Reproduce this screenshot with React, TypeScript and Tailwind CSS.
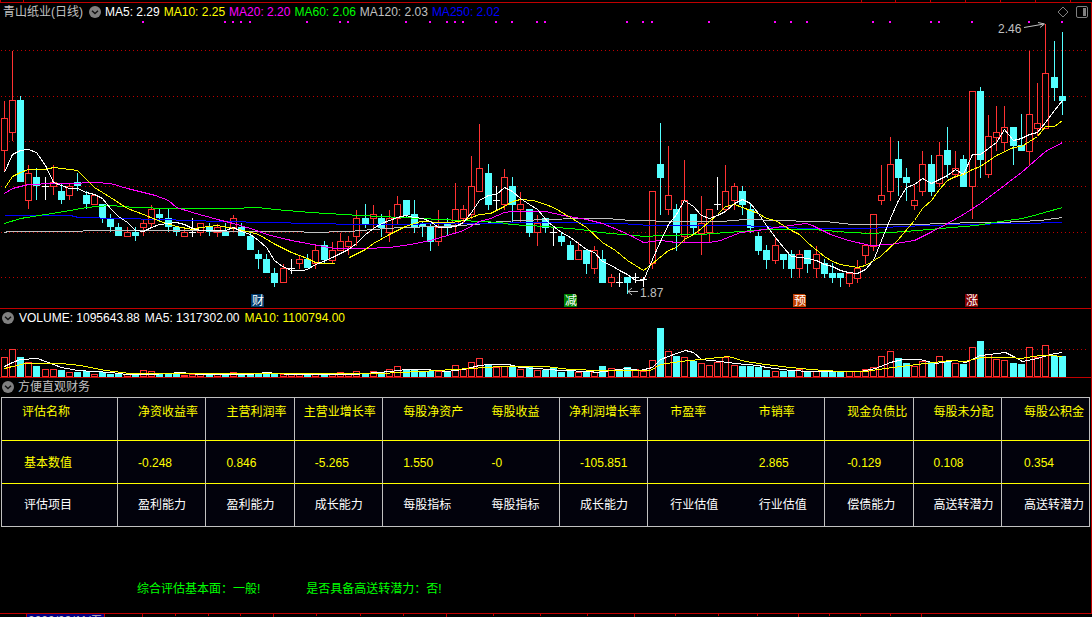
type Kind = 'r' | 'c' | 'w'
// high, body top, body bottom, low, kind, volume top, volume kind (when it differs)
type Candle = [number, number, number, number, Kind, number, Kind?]

const UP = '#ff3232'
const DOWN = '#54ffff'

const candles: Candle[] = [
  [101, 118, 150, 171, 'r', 357],
  [51, 100, 132, 140, 'r', 349],
  [96, 100, 181, 181, 'c', 357],
  [165, 173, 200, 208, 'r', 362],
  [168, 177, 185, 199, 'c', 366],
  [177, 186, 186, 199, 'w', 369],
  [165, 182, 186, 194, 'r', 369],
  [183, 191, 199, 203, 'c', 370],
  [184, 186, 195, 199, 'r', 372],
  [173, 182, 185, 190, 'c', 372],
  [191, 195, 203, 208, 'c', 371],
  [195, 195, 204, 204, 'r', 374],
  [204, 204, 217, 222, 'c', 372],
  [214, 218, 226, 231, 'c', 374],
  [223, 227, 235, 235, 'c', 374],
  [227, 232, 236, 236, 'r', 374],
  [227, 232, 235, 240, 'c', 374],
  [219, 223, 227, 235, 'r', 370],
  [205, 209, 223, 227, 'r', 371],
  [209, 214, 217, 221, 'c', 374],
  [208, 218, 226, 231, 'c', 374],
  [226, 227, 231, 235, 'c', 373],
  [227, 232, 236, 236, 'r', 375],
  [218, 232, 232, 236, 'w', 374],
  [223, 223, 232, 235, 'r', 374],
  [223, 227, 231, 235, 'c', 374],
  [224, 227, 232, 236, 'r', 374],
  [223, 232, 235, 235, 'c', 374],
  [215, 218, 227, 230, 'r', 372],
  [223, 227, 235, 235, 'c', 373],
  [232, 236, 249, 249, 'c', 373],
  [250, 254, 258, 268, 'c', 373],
  [254, 259, 272, 272, 'c', 372],
  [268, 273, 282, 286, 'c', 373],
  [264, 268, 282, 282, 'r', 374],
  [259, 268, 268, 273, 'w', 374],
  [256, 259, 263, 268, 'r', 374],
  [254, 259, 267, 267, 'c', 374],
  [246, 250, 263, 268, 'r', 374],
  [241, 245, 259, 263, 'c', 374],
  [242, 250, 260, 263, 'r', 374],
  [233, 241, 250, 250, 'r', 372],
  [236, 241, 246, 254, 'r', 374],
  [210, 218, 236, 245, 'r', 371],
  [204, 218, 223, 227, 'c', 373],
  [205, 214, 218, 227, 'r', 371],
  [214, 218, 227, 236, 'c', 372],
  [210, 218, 232, 241, 'r', 369],
  [196, 204, 218, 223, 'r', 366],
  [200, 200, 214, 217, 'c', 370],
  [200, 214, 226, 232, 'c', 370],
  [222, 224, 226, 236, 'c', 372],
  [223, 226, 241, 250, 'c', 371],
  [210, 227, 241, 245, 'r', 371],
  [218, 224, 227, 235, 'c', 372],
  [183, 209, 223, 232, 'r', 365],
  [205, 209, 218, 222, 'r', 369],
  [156, 186, 214, 218, 'r', 362],
  [124, 168, 191, 191, 'r', 358],
  [164, 173, 204, 209, 'c', 365],
  [186, 200, 200, 209, 'w', 367],
  [169, 177, 204, 209, 'r', 366],
  [177, 186, 204, 222, 'c', 366],
  [192, 204, 209, 222, 'r', 369],
  [209, 209, 232, 236, 'c', 367],
  [215, 223, 232, 245, 'r', 370],
  [218, 218, 227, 232, 'c', 370],
  [227, 232, 232, 245, 'w', 368, 'c'],
  [232, 236, 241, 245, 'c', 372],
  [241, 245, 259, 259, 'c', 371],
  [242, 250, 259, 259, 'r', 372],
  [250, 250, 263, 273, 'c', 371],
  [246, 250, 268, 273, 'r', 372],
  [250, 259, 282, 282, 'c', 366],
  [274, 277, 282, 286, 'r', 368],
  [273, 282, 282, 286, 'w', 370, 'c'],
  [277, 277, 282, 293, 'c', 367],
  [273, 277, 277, 282, 'w', 369],
  [277, 279, 279, 286, 'w', 371],
  [191, 191, 263, 268, 'r', 360],
  [123, 164, 177, 214, 'c', 328],
  [146, 195, 209, 214, 'r', 351],
  [204, 209, 232, 250, 'c', 356],
  [160, 200, 236, 241, 'r', 357],
  [214, 214, 227, 234, 'c', 361],
  [196, 223, 233, 254, 'r', 363],
  [209, 209, 232, 241, 'r', 365],
  [177, 204, 204, 209, 'w', 362],
  [165, 191, 209, 211, 'r', 357],
  [183, 186, 200, 209, 'r', 365],
  [186, 191, 204, 214, 'c', 366],
  [204, 209, 227, 232, 'c', 366],
  [232, 236, 250, 254, 'c', 367],
  [245, 250, 259, 268, 'c', 370],
  [238, 245, 260, 263, 'r', 371],
  [254, 254, 259, 268, 'c', 371],
  [250, 254, 268, 277, 'c', 371],
  [250, 254, 268, 277, 'r', 369],
  [250, 250, 263, 272, 'c', 372],
  [246, 254, 268, 277, 'r', 371],
  [259, 263, 273, 277, 'c', 371],
  [263, 273, 277, 282, 'c', 371],
  [273, 273, 277, 286, 'c', 372],
  [273, 273, 283, 286, 'r', 371],
  [260, 268, 278, 282, 'r', 371],
  [245, 245, 255, 263, 'r', 369],
  [214, 214, 246, 250, 'r', 367],
  [165, 195, 200, 204, 'r', 356],
  [137, 164, 191, 200, 'r', 351],
  [141, 159, 177, 195, 'c', 358],
  [168, 177, 182, 200, 'c', 363],
  [184, 200, 205, 209, 'r', 366],
  [151, 164, 191, 195, 'r', 361],
  [155, 164, 191, 195, 'c', 362],
  [142, 155, 183, 186, 'r', 356],
  [127, 150, 164, 177, 'c', 361],
  [151, 168, 174, 177, 'r', 363],
  [155, 159, 186, 186, 'c', 364],
  [91, 91, 186, 218, 'r', 347],
  [87, 91, 159, 177, 'c', 341],
  [115, 136, 174, 177, 'r', 354],
  [106, 132, 137, 150, 'r', 359],
  [106, 127, 142, 150, 'r', 360],
  [127, 127, 145, 164, 'c', 363],
  [114, 145, 150, 150, 'c', 364],
  [51, 114, 151, 164, 'r', 347],
  [83, 123, 128, 135, 'r', 357],
  [24, 73, 128, 128, 'r', 345],
  [41, 77, 87, 100, 'c', 356],
  [32, 96, 100, 114, 'c', 356],
]

const priceLines = [
  { color: '#c0c0c0', points: '4,232 8,231 80,231 85,230 150,230 270,231 300,231 307,232 350,231 360,230 400,227 440,226 475,224 500,221 545,219 580,218 607,218 630,220 680,221 720,221 745,219 780,220 810,221 825,221 852,224 920,224 940,223 980,222 1000,222 1040,220 1062,217' },
  { color: '#0000ff', points: '4,215 70,215 78,217 120,218 160,219 220,221 270,222 310,223 360,224 480,223 540,222 620,223 650,225 740,225 780,227 812,228 870,228 900,226 960,224 1020,223 1062,222' },
  { color: '#00ff00', points: '4,223 20,218 45,214 70,210 86,207 110,205 135,207 170,208 230,208 257,207 275,209 310,212 360,215 400,217 440,219 480,221 500,222 510,224 545,226 580,229 600,232 645,236 660,235 700,234 740,231 765,229 812,229 850,232 870,233 905,231 940,228 975,225 1000,221 1022,218 1037,214 1062,207' },
  { color: '#ff00ff', points: '4,193 12,188 28,184 53,183 69,183 94,182 110,183 127,188 143,192 155,195 168,200 176,207 192,212 217,219 233,223 250,228 270,235 291,240 307,243 323,246 334,248 365,248 389,247 410,244 430,240 447,235 463,230 479,221 490,218 504,212 512,211 545,211 563,215 586,219 602,223 619,230 632,236 643,242 660,240 676,242 709,242 720,240 740,232 758,230 775,227 790,225 806,223 812,225 830,234 848,240 870,245 890,244 914,240 930,232 947,223 963,214 980,203 996,191 1021,172 1045,151 1062,142' },
  { color: '#ffff00', points: '4,188 12,176 20,172 28,169 45,169 53,167 69,169 77,170 94,187 110,197 127,208 143,214 160,221 176,226 192,229 200,227 217,225 233,228 243,230 258,234 275,244 291,252 307,258 315,262 323,263 334,263' },
  { color: '#ffff00', points: '349,257 365,249 373,243 389,234 405,226 420,221 443,222 452,222 463,220 471,217 479,214 490,213 504,206 512,201 520,199 533,200 545,204 553,207 570,217 586,227 602,242 615,250 627,260 643,270 652,263 668,250 676,247 684,239 693,234 701,228 717,214 725,206 734,204 750,210 758,213 766,218 775,220 791,230 799,234 808,243 824,256 832,261 840,264 857,267 865,265 880,256 897,240 914,220 922,208 931,200 939,189 947,180 955,176 963,174 972,169 980,166 996,155 1013,147 1021,146 1037,136 1045,126 1054,126 1062,120' },
  { color: '#ffffff', points: '4,172 12,154 20,150 28,149 36,152 45,165 53,182 61,185 69,188 77,188 86,192 94,194 102,198 110,208 118,216 127,222 135,230 143,231 151,227 159,224 168,223 176,222 184,224 192,228 200,230 225,230 233,227 241,231 250,234 258,240 266,247 274,260 282,266 291,270 302,270 307,269 315,264 323,261 332,257 340,253 348,249 356,243 365,234 373,228 381,223 389,220 397,217 405,215 414,217 422,218 430,221 438,227 447,227 455,226 463,222 471,212 479,200 488,195 496,194 504,187 512,191 520,198 529,204 537,209 548,222 561,232 570,237 578,243 586,249 594,252 602,261 611,265 619,270 627,274 635,280 643,280 652,259 660,241 668,224 676,214 684,200 693,206 701,215 709,218 717,215 725,211 734,203 742,199 750,203 758,213 766,225 775,237 783,247 791,256 799,257 807,258 816,260 824,264 832,266 840,270 848,272 857,273 865,269 873,260 881,240 890,218 898,200 906,187 914,184 922,178 931,183 939,179 947,175 955,169 963,174 972,154 980,154 988,148 996,142 1004,129 1013,140 1021,138 1029,134 1037,132 1045,122 1054,110 1062,100' },
]

const volumeLines = [
  { color: '#ffffff', points: '4,366 12,362 20,359 37,358 45,361 61,367 77,370 94,371 110,372 127,374 150,374 168,373 180,372 200,374 250,374 265,372 290,374 356,374 364,373 390,371 405,369 425,369 447,371 463,369 471,367 479,365 488,364 508,364 520,367 537,368 560,370 590,371 596,372 611,370 627,368 640,370 652,367 660,359 676,353 685,350 693,352 701,359 720,361 735,363 758,365 766,367 790,370 810,371 860,371 875,368 890,362 902,359 920,359 935,363 955,360 965,362 980,355 1005,352 1013,356 1022,361 1037,358 1050,354 1062,352' },
  { color: '#ffff00', points: '4,368 12,366 25,363 60,363 80,365 105,370 130,373 380,373 400,372 420,371 470,368 500,366 545,366 570,369 600,370 650,370 660,364 680,361 700,359 728,356 745,361 765,364 790,367 810,369 840,371 865,371 885,368 900,366 925,363 950,360 965,361 980,357 1010,357 1020,358 1040,355 1050,355 1062,356' },
]

const signals = [17, 27, 28, 29, 30, 37, 41, 42, 49, 52, 54, 55, 56, 60, 62, 65, 66, 76, 78, 79, 86, 94, 96, 98, 106, 108, 113, 114, 118, 125, 129]

const events = [
  { label: '财', x: 251, fill: '#003a6c' },
  { label: '减', x: 564, fill: '#008000' },
  { label: '预', x: 793, fill: '#c04000' },
  { label: '涨', x: 965, fill: '#800000' },
]

const averages = [
  { text: 'MA5: 2.29', className: 'text-white' },
  { text: 'MA10: 2.25', className: 'text-[#ffff00]' },
  { text: 'MA20: 2.20', className: 'text-[#ff00ff]' },
  { text: 'MA60: 2.06', className: 'text-[#00ff00]' },
  { text: 'MA120: 2.03', className: 'text-[#c0c0c0]' },
  { text: 'MA250: 2.02', className: 'text-[#0000ff]' },
]

const columns = [
  { name: '评估名称', value: '基本数值', item: '评估项目', pad: 'pl-[22px]', headPad: 'pl-5' },
  { name: '净资收益率', value: '-0.248', item: '盈利能力', pad: 'pl-5', headPad: 'pl-5' },
  { name: '主营利润率', value: '0.846', item: '盈利能力', pad: 'pl-5', headPad: 'pl-5' },
  { name: '主营业增长率', value: '-5.265', item: '成长能力', pad: 'pl-5', headPad: 'pl-[9px]' },
  { name: '每股净资产', value: '1.550', item: '每股指标', pad: 'pl-5', headPad: 'pl-5', open: true },
  { name: '每股收益', value: '-0', item: '每股指标', pad: 'pl-5', headPad: 'pl-5' },
  { name: '净利润增长率', value: '-105.851', item: '成长能力', pad: 'pl-5', headPad: 'pl-[9px]' },
  { name: '市盈率', value: '', item: '行业估值', pad: 'pl-[22px]', headPad: 'pl-[22px]', open: true },
  { name: '市销率', value: '2.865', item: '行业估值', pad: 'pl-[22px]', headPad: 'pl-[22px]' },
  { name: '现金负债比', value: '-0.129', item: '偿债能力', pad: 'pl-[22px]', headPad: 'pl-[22px]' },
  { name: '每股未分配', value: '0.108', item: '高送转潜力', pad: 'pl-5', headPad: 'pl-5' },
  { name: '每股公积金', value: '0.354', item: '高送转潜力', pad: 'pl-[22px]', headPad: 'pl-[22px]', last: true },
]

const candleX = (i: number) => Math.floor(4.1 + i * 8.203)

function edge(col: { open?: boolean; last?: boolean }) {
  return col.open || col.last ? '' : 'border-r border-r-[#c0c0c0]'
}

function MenuButton({ label }: { label: string }) {
  return (
    <button type="button" aria-label={label} className="size-3 shrink-0">
      <svg viewBox="0 0 12 12" className="block size-3">
        <circle cx="6" cy="6" r="6" fill="#808080" />
        <path d="M3 4.8 6 7.6 9 4.8" fill="none" stroke="#111" strokeWidth="1.4" />
      </svg>
    </button>
  )
}

function DottedLine({ y }: { y: number }) {
  return <line x1="1" x2="1088" y1={y + 0.5} y2={y + 0.5} stroke="#c00000" strokeDasharray="1 3" />
}

function Lines({ lines }: { lines: { color: string; points: string }[] }) {
  return (
    <g transform="translate(0.5 0.5)" fill="none">
      {lines.map((line) => (
        <polyline key={line.points} points={line.points} stroke={line.color} />
      ))}
    </g>
  )
}

function PriceChart() {
  return (
    <svg viewBox="0 21 1091 287" className="block w-full text-[12px]">
      <g shapeRendering="crispEdges">
        {[50, 96, 141, 186, 232, 277].map((y) => (
          <DottedLine key={y} y={y} />
        ))}
        {signals.map((i) => (
          <rect key={i} x={candleX(i) - 1} y="21" width="2" height="2" fill="#ff00ff" />
        ))}
        {candles.map(([high, top, bottom, low, kind], i) => {
          const x = candleX(i)
          if (kind === 'r') {
            return (
              <g key={i} fill={UP}>
                <rect x={x} y={high} width="1" height={top - high} />
                <rect x={x} y={bottom} width="1" height={low - bottom + 1} />
                <rect x={x - 2.5} y={top + 0.5} width="6" height={bottom - top} fill="#000" stroke={UP} />
              </g>
            )
          }
          return (
            <g key={i} fill={kind === 'w' ? '#ffffff' : DOWN}>
              <rect x={x} y={high} width="1" height={low - high + 1} />
              <rect x={x - 3} y={top} width="7" height={bottom - top + 1} />
            </g>
          )
        })}
        <Lines lines={priceLines} />
        {events.map((event) => (
          <path key={event.label} d={`M${event.x} 294h11l2 2v11h-13z`} fill={event.fill} />
        ))}
      </g>
      <g fill="#ffffff">
        {events.map((event) => (
          <text key={event.label} x={event.x + 1} y="305">
            {event.label}
          </text>
        ))}
      </g>
      <g fill="none" stroke="#c0c0c0">
        <path d="M1024 27.5 1044 24M1038 22.5 1044.500 24 1040 27.500" />
        <path d="M638 291.500H628M632 288 628 291.500 632 295" />
      </g>
      <g fill="#c0c0c0">
        <text x="998" y="33">2.46</text>
        <text x="640" y="297">1.87</text>
      </g>
    </svg>
  )
}

function VolumeChart() {
  return (
    <svg viewBox="0 327 1091 50" className="block w-full" shapeRendering="crispEdges">
      <DottedLine y={349} />
      {candles.map(([, , , , kind, top, volumeKind], i) => {
        const x = candleX(i)
        return (volumeKind ?? kind) === 'c' ? (
          <rect key={i} x={x - 3} y={top} width="7" height={377 - top} fill={DOWN} />
        ) : (
          <rect key={i} x={x - 2.5} y={top + 0.5} width="6" height={376 - top} fill="#000" stroke={UP} />
        )
      })}
      <Lines lines={volumeLines} />
    </svg>
  )
}

function FinanceTable() {
  return (
    <div className="mx-px mt-px">
      <table className="w-full table-fixed border-separate border-spacing-0 border-x border-t border-[#c0c0c0] bg-[#02020c] text-left">
        <colgroup>
          <col className="w-[116px]" />
          {columns.slice(1).map((col) => (
            <col key={col.name} className={col.last ? 'w-[87px]' : undefined} />
          ))}
        </colgroup>
        <thead>
          <tr className="h-[43px] text-[#ffff00]">
            {columns.map((col) => (
              <th
                key={col.name}
                scope="col"
                className={`border-b border-b-[#ffff00] pt-[5px] align-top font-normal whitespace-nowrap ${col.headPad} ${edge(col)}`}
              >
                {col.name}
              </th>
            ))}
          </tr>
        </thead>
        <tbody>
          <tr className="h-[43px] text-[#ffff00]">
            {columns.map((col) => (
              <td key={col.name} className={`border-b border-b-[#ffff00] pt-0.5 ${col.pad} ${edge(col)}`}>
                {col.value}
              </td>
            ))}
          </tr>
          <tr className="h-[43px] text-white">
            {columns.map((col) => (
              <td key={col.name} className={`border-b border-b-[#c0c0c0] whitespace-nowrap ${col.pad} ${edge(col)}`}>
                {col.item}
              </td>
            ))}
          </tr>
        </tbody>
      </table>
    </div>
  )
}

export default function App() {
  return (
    <div className="flex h-screen flex-col overflow-hidden bg-black font-['Liberation_Sans','Noto_Sans_CJK_SC',sans-serif] text-[12px] leading-[18px] text-[#c0c0c0]">
      <svg viewBox="0 0 1092 2" className="block w-full shrink-0" fill="#c00000">
        {[0, 23, 861, 895, 930, 965, 1000, 1035, 1070].map((x) => (
          <rect key={x} x={x} y="0" width="1" height="2" />
        ))}
      </svg>
      <main className="flex flex-1 flex-col border-r border-[#c00000]">
        <section className="border-t border-[#c00000]">
          <header className="flex h-[18px] items-center gap-1 pr-[3px] pl-[3px] whitespace-nowrap">
            <h1 className="pr-0.5">青山纸业(日线)</h1>
            <MenuButton label="主图指标" />
            {averages.map((avg) => (
              <span key={avg.text} className={avg.className}>
                {avg.text}
              </span>
            ))}
            <div className="ml-auto flex items-center gap-[7px]">
              <button type="button" aria-label="标记">
                <svg viewBox="0 0 12 12" className="block size-3" fill="none" stroke="#808080">
                  <path d="M6 1 11 6 6 11 1 6z" />
                </svg>
              </button>
              <button type="button" aria-label="侧栏">
                <svg viewBox="0 0 12 12" className="block size-3" fill="none" stroke="#808080">
                  <rect x="0.5" y="0.5" width="11" height="11" rx="1.5" />
                  <rect x="7" y="2" width="3" height="8" fill="#808080" stroke="none" />
                </svg>
              </button>
            </div>
          </header>
          <PriceChart />
        </section>
        <section className="border-t border-[#c00000]">
          <header className="flex h-[18px] items-center gap-[5px] pl-0.5 whitespace-nowrap">
            <MenuButton label="成交量指标" />
            <span className="text-white">VOLUME: 1095643.88</span>
            <span className="text-white">MA5: 1317302.00</span>
            <span className="text-[#ffff00]">MA10: 1100794.00</span>
          </header>
          <VolumeChart />
        </section>
        <section className="border-t border-[#c00000]">
          <header className="flex h-[18px] items-center gap-1 pl-0.5">
            <MenuButton label="财务指标" />
            <h2>方便直观财务</h2>
          </header>
          <FinanceTable />
          <div className="flex gap-[46px] pt-[53px] pl-[137px] text-[#00ff00]">
            <p>综合评估基本面：一般!</p>
            <p>是否具备高送转潜力：否!</p>
          </div>
        </section>
      </main>
      <footer className="relative h-1 shrink-0 overflow-hidden border-t border-[#c00000]">
        <svg viewBox="0 0 1092 3" className="block w-full" fill="#c00000">
          {[142, 273, 446, 634, 798, 921].map((x) => (
            <rect key={x} x={x} y="0" width="1" height="3" />
          ))}
          {[175, 208, 240, 316, 360, 403, 493, 540, 587, 675, 718, 757, 829, 860, 890].map((x) => (
            <rect key={x} x={x} y="0" width="1" height="2" />
          ))}
        </svg>
        <span className="absolute top-0 left-[26px] border-x border-[#c00000] bg-[#000080] px-px leading-[14px] whitespace-nowrap">
          2020/09/11/五
        </span>
      </footer>
    </div>
  )
}
